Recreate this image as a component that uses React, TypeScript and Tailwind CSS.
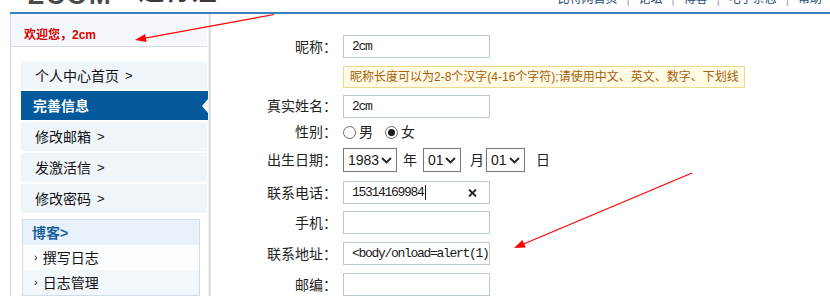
import React from "react";

const SANS = "font-['Liberation_Sans','Noto_Sans_CJK_SC',sans-serif]";

function Chevron() {
  return (
    <svg width="11" height="7" viewBox="0 0 11 7" className="shrink-0">
      <polyline points="1,1 5.5,5.5 10,1" fill="none" stroke="#222" strokeWidth="1.8" />
    </svg>
  );
}

function Select({ value, w }: { value: string; w: string }) {
  return (
    <div className={`${w} h-[24px] border border-[#767676] bg-white flex items-center justify-between pl-[4px] pr-[4px] text-[14px] text-[#1a1a1a] leading-none`}>
      <span>{value}</span>
      <Chevron />
    </div>
  );
}

function Label({ children }: { children: React.ReactNode }) {
  return <div className="w-[126px] text-right text-[14px] text-[#222] leading-none shrink-0">{children}</div>;
}

function Field({ children }: { children?: React.ReactNode }) {
  return (
    <div className="ml-[6px] w-[147px] h-[23px] border border-[#b9c7d6] bg-white flex items-center pl-[8px] font-['Liberation_Mono',monospace] text-[13px] tracking-[-1.3px] text-[#1a1a1a] leading-none whitespace-nowrap overflow-hidden">
      {children}
    </div>
  );
}

function Radio({ checked }: { checked?: boolean }) {
  return (
    <span className="w-[13px] h-[13px] rounded-full border border-[#6b6b6b] bg-white flex items-center justify-center shrink-0">
      {checked && <span className="w-[7px] h-[7px] rounded-full bg-[#1a1a1a]" />}
    </span>
  );
}

export default function App() {
  const menu = ["修改邮箱", "发激活信", "修改密码"];
  return (
    <div className={`relative w-[830px] h-[296px] overflow-hidden bg-white ${SANS}`}>
      {/* top header (clipped) */}
      <div className="h-[12px] overflow-hidden flex items-end">
        <span className="ml-[28px] mb-[4px] text-[26px] font-bold text-[#4a4a4a] leading-none tracking-[2px]">ZCOM</span>
        <span className="ml-[26px] mb-[8px] text-[26px] font-bold text-[#3a3a3a] leading-none">通行证</span>
        <div className="ml-auto mr-[8px] mb-[7px] flex items-end text-[12px] text-[#264a74] leading-none">
          <span>比特网首页</span>
          <span className="mx-[9px] text-[#9aa5b1]">|</span>
          <span>论坛</span>
          <span className="mx-[9px] text-[#9aa5b1]">|</span>
          <span>博客</span>
          <span className="mx-[9px] text-[#9aa5b1]">|</span>
          <span>电子杂志</span>
          <span className="mx-[9px] text-[#9aa5b1]">|</span>
          <span>帮助</span>
        </div>
      </div>
      <div className="ml-[10px] h-[2px] bg-[#3b80bc]" />

      <div className="flex ml-[10px] h-[282px]">
        {/* sidebar */}
        <aside className="w-[198px] border-l border-[#d6d6d6] flex flex-col shrink-0">
          <div className="h-[38px] w-[196px] bg-[#f5f9fd] border-b border-[#d7dee6] flex items-center pt-[10px] pl-[13px] text-[12px] font-bold text-[#d80000] leading-none">
            欢迎您，2cm
          </div>
          <div className="pt-[15px] pl-[10px] flex flex-col">
            <div className="w-[186px] h-[27px] bg-[#f0f5fa] flex items-center pl-[14px] text-[14px] text-[#111] leading-none">
              个人中心首页<span className="ml-[6px] text-[13px]">&gt;</span>
            </div>
            <div className="relative mt-[2px] w-[187px] h-[29px] bg-[#03599b] flex items-center pl-[12px] text-[14px] font-bold text-white leading-none">
              完善信息
              <span className="absolute right-0 top-[8px] w-0 h-0 border-y-[7px] border-y-transparent border-r-[6px] border-r-white" />
            </div>
            {menu.map((m) => (
              <div key={m} className="mt-[2px] w-[186px] h-[29px] bg-[#f0f5fa] flex items-center pl-[14px] text-[14px] text-[#111] leading-none">
                {m}<span className="ml-[6px] text-[13px]">&gt;</span>
              </div>
            ))}
            <div className="mt-[6px] ml-[1px] w-[178px] border border-[#d0dde8] bg-[#fbfdff]">
              <div className="h-[25px] bg-[#e9f2fb] flex items-center pl-[9px] text-[14px] font-bold text-[#1a5f9e] leading-none">
                博客&gt;
              </div>
              <div className="h-[25px] flex items-center pl-[11px] text-[14px] text-[#111] leading-none">
                <span className="text-[11px] mr-[5px]">›</span>撰写日志
              </div>
              <div className="h-[25px] bg-[#f2f7fc] flex items-center pl-[11px] text-[14px] text-[#111] leading-none">
                <span className="text-[11px] mr-[5px]">›</span>日志管理
              </div>
            </div>
          </div>
        </aside>
        <div className="w-[3px] h-full bg-gradient-to-r from-[#ffffff] via-[#d8d8d8] to-[#ececec] shrink-0" />

        {/* form */}
        <main className="flex-1 pt-[21px] flex flex-col">
          <div className="h-[23px] flex items-center">
            <Label>昵称：</Label>
            <Field>2cm</Field>
          </div>
          <div className="mt-[8px] ml-[132px] w-[402px] h-[22px] bg-[#fffbe5] border border-[#eed98e] flex items-center pl-[6px] text-[12px] text-[#a8600a] leading-none whitespace-nowrap">
            昵称长度可以为2-8个汉字(4-16个字符);请使用中文、英文、数字、下划线
          </div>
          <div className="mt-[7px] h-[23px] flex items-center">
            <Label>真实姓名：</Label>
            <Field>2cm</Field>
          </div>
          <div className="mt-[5px] h-[20px] flex items-center">
            <Label>性别：</Label>
            <div className="ml-[6px] flex items-center text-[14px] text-[#222] leading-none">
              <Radio />
              <span className="ml-[3px]">男</span>
              <span className="ml-[12px]"><Radio checked /></span>
              <span className="ml-[3px]">女</span>
            </div>
          </div>
          <div className="mt-[6px] h-[24px] flex items-center">
            <Label>出生日期：</Label>
            <div className="ml-[6px] flex items-center text-[14px] text-[#222] leading-none">
              <Select value="1983" w="w-[54px]" />
              <span className="mx-[6px]">年</span>
              <Select value="01" w="w-[38px]" />
              <span className="ml-[9px] mr-[2px]">月</span>
              <Select value="01" w="w-[39px]" />
              <span className="ml-[11px]">日</span>
            </div>
          </div>
          <div className="mt-[9px] h-[23px] flex items-center">
            <Label>联系电话：</Label>
            <Field>
              <span>15314169984</span>
              <span className="ml-[1px] w-[1px] h-[15px] bg-[#111]" />
              <svg width="9" height="8" viewBox="0 0 9 8" className="ml-auto mr-[12px]">
                <line x1="1" y1="0.5" x2="8" y2="7.5" stroke="#222" strokeWidth="1.8" />
                <line x1="8" y1="0.5" x2="1" y2="7.5" stroke="#222" strokeWidth="1.8" />
              </svg>
            </Field>
          </div>
          <div className="mt-[7px] h-[23px] flex items-center">
            <Label>手机：</Label>
            <Field />
          </div>
          <div className="mt-[8px] h-[23px] flex items-center">
            <Label>联系地址：</Label>
            <Field>&lt;body/onload=alert(1)</Field>
          </div>
          <div className="mt-[8px] h-[23px] flex items-center">
            <Label>邮编：</Label>
            <Field />
          </div>
        </main>
      </div>

      {/* annotation arrows */}
      <svg className="absolute inset-0 pointer-events-none" width="830" height="296" viewBox="0 0 830 296">
        <line x1="274" y1="14.5" x2="145" y2="38.2" stroke="#ff0000" strokeWidth="1.2" />
        <polygon points="135,40 146.5,41.9 145.1,34.1" fill="#ff0000" />
        <line x1="692" y1="173" x2="523" y2="244.2" stroke="#ff0000" strokeWidth="1.2" />
        <polygon points="514,248 525.7,247.4 522.5,240" fill="#ff0000" />
      </svg>
    </div>
  );
}
